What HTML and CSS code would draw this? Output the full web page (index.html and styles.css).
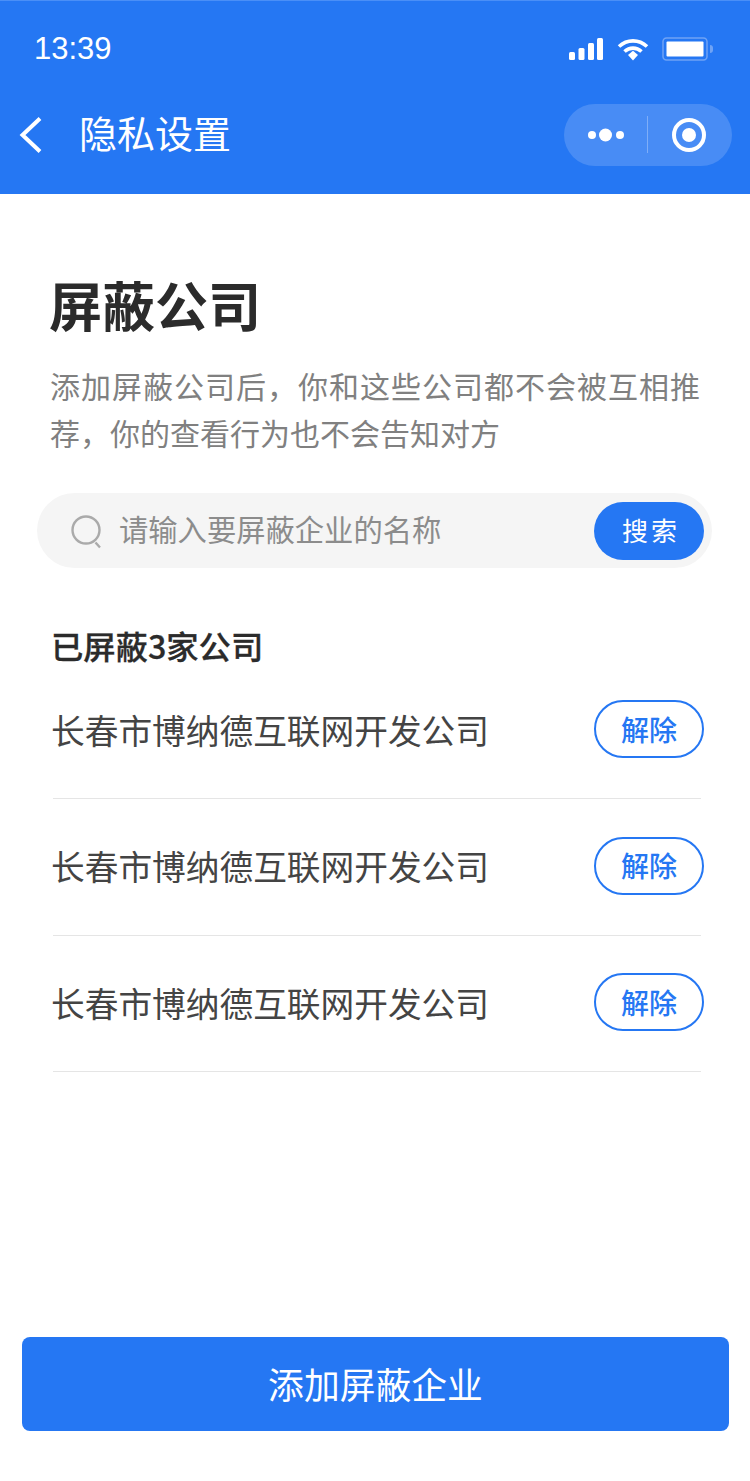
FILE: index.html
```html
<!DOCTYPE html>
<html lang="zh-CN">
<head>
<meta charset="utf-8">
<title>隐私设置</title>
<link rel="stylesheet" href="styles.css">
</head>
<body>
<div class="page">
  <header class="header">
    <div class="status">
      <span class="time">13:39</span>
      <div class="status-icons">
        <svg class="signal" width="34" height="22" viewBox="0 0 34 22"><rect x="0" y="14" width="6" height="8" rx="1.5"/><rect x="9.500" y="10" width="6" height="12" rx="1.5"/><rect x="19" y="5" width="6" height="17" rx="1.5"/><rect x="28" y="0" width="6" height="22" rx="1.5"/></svg>
        <svg class="wifi" width="32" height="23" viewBox="0 0 32 23"><path d="M2 8.500C10 1 22 1 30 8.500" fill="none" stroke="#fff" stroke-width="3.600"/><path d="M7.500 13.500C12.500 9 19.500 9 24.500 13.500" fill="none" stroke="#fff" stroke-width="3.600"/><path d="M11 17l5-4.200 5 4.200-5 5.500z" fill="#fff"/></svg>
        <svg class="battery" width="46" height="24" viewBox="0 0 46 24"><rect x="1" y="1" width="44" height="22" rx="3.500" fill="none" stroke="#6fa3f5" stroke-width="1.500"/><rect x="4.500" y="4.500" width="37" height="15" rx="1" fill="#fff"/></svg>
        <span class="battery-tip"></span>
      </div>
    </div>
    <nav class="nav">
      <svg class="back" width="24" height="38" viewBox="0 0 24 38"><path d="M21 2.500L3.500 19 21 35.500" fill="none" stroke="#fff" stroke-width="4"/></svg>
      <h1 class="nav-title">隐私设置</h1>
      <div class="capsule">
        <svg width="38" height="14" viewBox="0 0 38 14"><circle cx="5" cy="7" r="4" fill="#fff"/><circle cx="18.500" cy="7" r="6.500" fill="#fff"/><circle cx="33" cy="7" r="4" fill="#fff"/></svg>
        <span class="capsule-line"></span>
        <svg width="34" height="34" viewBox="0 0 34 34"><circle cx="17" cy="17" r="15" fill="none" stroke="#fff" stroke-width="4"/><circle cx="17" cy="17" r="7" fill="#fff"/></svg>
      </div>
    </nav>
  </header>
  <main class="main">
    <h2 class="title">屏蔽公司</h2>
    <p class="desc">添加屏蔽公司后，你和这些公司都不会被互相推荐，你的查看行为也不会告知对方</p>
    <div class="search">
      <svg class="search-icon" width="32" height="34" viewBox="0 0 32 34"><circle cx="15" cy="15" r="13.500" fill="none" stroke="#aaa" stroke-width="2.400"/><path d="M24.500 27.500l4.500 5" stroke="#aaa" stroke-width="2.400" fill="none"/></svg>
      <span class="placeholder">请输入要屏蔽企业的名称</span>
      <span class="search-btn">搜索</span>
    </div>
    <h3 class="count">已屏蔽3家公司</h3>
    <ul class="list">
      <li class="row"><span class="name">长春市博纳德互联网开发公司</span><span class="remove">解除</span></li>
      <li class="row"><span class="name">长春市博纳德互联网开发公司</span><span class="remove">解除</span></li>
      <li class="row"><span class="name">长春市博纳德互联网开发公司</span><span class="remove">解除</span></li>
    </ul>
  </main>
  <div class="footer"><span class="add">添加屏蔽企业</span></div>
</div>
</body>
</html>
```
FILE: styles.css
```css
* { box-sizing: border-box; margin: 0; padding: 0; }
html, body { width: 750px; height: 1481px; background: #fff; overflow: hidden; }
body { font-family: "Liberation Sans", "Noto Sans CJK SC", sans-serif; color: #333; }
.page { width: 750px; height: 1481px; display: flex; flex-direction: column; }
.header { height: 194px; background: #2577f3; color: #fff; border-top: 1px solid #4a8ff7; flex: none; }
.status { height: 75px; display: flex; justify-content: space-between; align-items: center; padding: 18px 42px 0 34px; }
.time { font-size: 31px; line-height: 36px; margin-top: 3px; }
.status-icons { display: flex; align-items: center; position: relative; margin-top: 3px; }
.signal { fill: #fff; margin-right: 14px; }
.wifi { margin-right: 13px; }
.battery-tip { position: absolute; right: -5px; top: 8px; width: 3px; height: 8px; border-radius: 0 4px 4px 0; background: #6fa3f5; }
.nav { height: 117px; display: flex; align-items: center; padding: 0 18px 0 19px; }
.back { flex: none; }
.nav-title { font-size: 38px; line-height: 50px; font-weight: 400; margin: 0 0 6px 36px; flex: 1; font-family: "Noto Sans CJK SC", sans-serif; }
.capsule { width: 168px; height: 62px; border-radius: 31px; background: rgba(255,255,255,.16); display: flex; align-items: center; padding-left: 23px; }
.capsule-line { width: 1px; height: 37px; background: rgba(255,255,255,.3); margin: 0 24px 0 22px; }
.main { flex: 1; padding: 0 46px 0 37px; }
.title { font-size: 53px; line-height: 74px; font-weight: 700; margin: 73px 0 0 12px; color: #2b2b2b; font-family: "Noto Sans CJK SC", sans-serif; }
.desc { font-size: 30px; line-height: 47px; text-align: justify; color: #808080; margin: 21px 0 0 13px; width: 650px; font-family: "Noto Sans CJK SC", sans-serif; font-weight: 400; }
.search { width: 675px; height: 75px; border-radius: 38px; background: #f5f5f5; margin-top: 37px; display: flex; align-items: center; padding: 0 8px 0 34px; }
.search-icon { flex: none; margin-top: 2px; }
.placeholder { font-size: 29.300px; color: #8c8c8c; margin: -5px 0 0 16px; flex: 1; font-family: "Noto Sans CJK SC", sans-serif; font-weight: 400; }
.search-btn { width: 110px; height: 58px; border-radius: 29px; background: #2577f3; color: #fff; font-size: 26px; letter-spacing: 3px; padding: 0 0 2px 4px; display: flex; align-items: center; justify-content: center; font-family: "Noto Sans CJK SC", sans-serif; font-weight: 400; }
.count { font-size: 32.300px; line-height: 28px; font-weight: 500; -webkit-text-stroke: 0.3px #2b2b2b; color: #2b2b2b; margin: 63px 0 0 14px; font-family: "Noto Sans CJK SC", sans-serif; }
.list { list-style: none; margin: 3.500px 0 0 16px; }
.row { height: 136.500px; border-bottom: 1px solid #e5e5e5; width: 648px; display: flex; align-items: center; justify-content: space-between; }
.name { font-size: 33.700px; margin: 0 0 2px -2px; color: #444; font-family: "Noto Sans CJK SC", sans-serif; font-weight: 400; white-space: nowrap; }
.remove { width: 110px; height: 58px; flex: none; border: 2px solid #2577f3; border-radius: 29px; padding-bottom: 1px; color: #2577f3; font-size: 28px; display: flex; align-items: center; justify-content: center; margin: -1.800px -3px 0 0; font-family: "Noto Sans CJK SC", sans-serif; font-weight: 500; }
.footer { padding: 0 21px 50px 22px; flex: none; }
.add { height: 94px; border-radius: 8px; padding-bottom: 2px; background: #2577f3; color: #fff; font-size: 35.800px; display: flex; align-items: center; justify-content: center; font-family: "Noto Sans CJK SC", sans-serif; font-weight: 400; }
```
